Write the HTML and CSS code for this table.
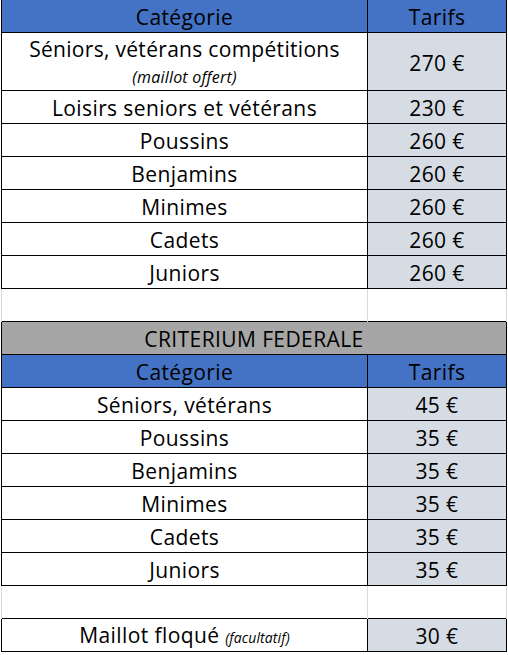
FILE: index.html
```html
<!DOCTYPE html>
<html lang="fr">
<head>
<meta charset="utf-8">
<link rel="stylesheet" href="styles.css">
</head>
<body>
<table class="tarifs">
  <colgroup><col class="c1"><col class="c2"></colgroup>
  <tr class="head first"><td>Catégorie</td><td>Tarifs</td></tr>
  <tr class="tall"><td class="stack"><span class="main">Séniors, vétérans compétitions</span><span class="note">(maillot offert)</span></td><td class="price">270 €</td></tr>
  <tr><td>Loisirs seniors et vétérans</td><td class="price">230 €</td></tr>
  <tr><td>Poussins</td><td class="price">260 €</td></tr>
  <tr><td>Benjamins</td><td class="price">260 €</td></tr>
  <tr><td>Minimes</td><td class="price">260 €</td></tr>
  <tr><td>Cadets</td><td class="price">260 €</td></tr>
  <tr><td>Juniors</td><td class="price">260 €</td></tr>
  <tr class="empty"><td></td><td></td></tr>
  <tr class="section"><td colspan="2">CRITERIUM FEDERALE</td></tr>
  <tr class="head"><td>Catégorie</td><td>Tarifs</td></tr>
  <tr><td>Séniors, vétérans</td><td class="price">45 €</td></tr>
  <tr><td>Poussins</td><td class="price">35 €</td></tr>
  <tr><td>Benjamins</td><td class="price">35 €</td></tr>
  <tr><td>Minimes</td><td class="price">35 €</td></tr>
  <tr><td>Cadets</td><td class="price">35 €</td></tr>
  <tr><td>Juniors</td><td class="price">35 €</td></tr>
  <tr class="empty"><td></td><td></td></tr>
  <tr><td>Maillot floqué <span class="small">(facultatif)</span></td><td class="price">30 €</td></tr>
</table>
</body>
</html>
```

FILE: styles.css
```css
html, body {
  margin: 0;
  padding: 0;
  background: #ffffff;
}
body {
  padding-left: 1px;
  font-family: "Open Sans", Lato, sans-serif;
  color: #000000;
}
.tarifs {
  border-collapse: collapse;
  table-layout: fixed;
  width: 505px;
  margin-top: -1px;
}
.c1 { width: 366px; }
.c2 { width: 139px; }
.tarifs td {
  border: 1px solid #000000;
  height: 33px;
  padding: 2px 0 0 0;
  box-sizing: border-box;
  text-align: center;
  vertical-align: middle;
  font-size: 21px;
  letter-spacing: 0.4px;
  line-height: 24px;
  white-space: nowrap;
  overflow: hidden;
}
.head td { background: #4472c4; }
.section td { background: #a6a6a6; }
.price { background: #d6dce4; }
.tarifs tr.tall td { height: 58px; }
.tarifs td.stack { vertical-align: top; padding-top: 4px; }
.tall .main { display: block; line-height: 24px; letter-spacing: 0.3px; }
.tall .note {
  display: block;
  margin-top: 3px;
  font-size: 16px;
  letter-spacing: 0.2px;
  font-style: italic;
  line-height: 26px;
}
.small { font-size: 14px; letter-spacing: 0.1px; font-style: italic; }
.tarifs tr.empty td {
  border-top: none;
  border-bottom: none;
  border-left: 1px solid #dadada;
  border-right: 1px solid #dadada;
  background: #ffffff;
}
```
